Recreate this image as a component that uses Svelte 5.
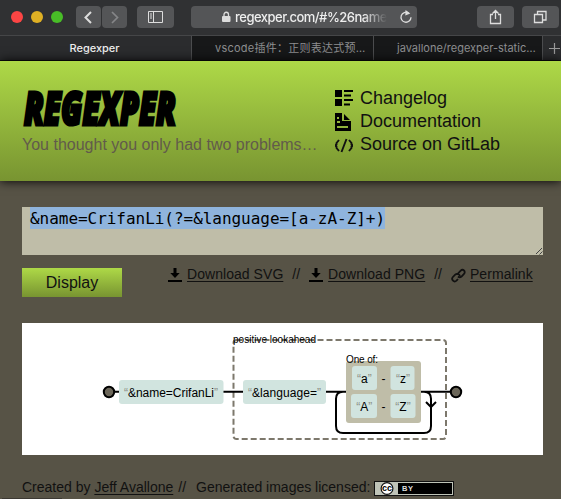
<script>
  const menu = [
    { icon: 'list', label: 'Changelog' },
    { icon: 'doc', label: 'Documentation' },
    { icon: 'code', label: 'Source on GitLab' }
  ];
  const ranges = [
    { y: 43, from: 'a', to: 'z' },
    { y: 71, from: 'A', to: 'Z' }
  ];
</script>

{#snippet download()}
  <svg class="dl" width="14" height="14" viewBox="0 0 14 14"><path d="M5.5 0h3v5h3.2L7 10 2.3 5h3.2zM0 12h14v2H0z" /></svg>
{/snippet}

<div class="page">
  <div class="toolbar">
    <i class="light red"></i><i class="light yellow"></i><i class="light green"></i>
    <div class="nav">
      <span class="tool back"><svg width="25" height="22" viewBox="0 0 25 22"><path d="M15 6l-5.5 5.5L15 17" stroke-width="2" /></svg></span>
      <span class="tool forward"><svg width="25" height="22" viewBox="0 0 25 22"><path d="M10 6l5.500 5.500L10 17" stroke-width="1.700" /></svg></span>
    </div>
    <span class="tool wide sidebar"><svg width="37" height="22" viewBox="0 0 37 22"><path d="M11.500 5.500h14v11h-14zM16.500 5.500v11M13 8h2M13 10h2M13 12h2" /></svg></span>
    <div class="address">
      <svg class="lock" width="9" height="12" viewBox="0 0 9 12"><rect y="5" width="8.500" height="6" rx="1" fill="#ddd" /><path d="M2 5V3.500a2.250 2.250 0 014.500 0V5" fill="none" stroke="#ddd" stroke-width="1.300" /></svg>
      <span class="url">regexper.com/#%26name%</span>
      <svg class="reload" width="14" height="14" viewBox="0 0 14 14"><path d="M9.500 2.900A5 5 0 1012 7.300" fill="none" stroke="#ddd" stroke-width="1.300" /><path d="M6.500 0l4.800 3.600-5 2z" fill="#ddd" /></svg>
    </div>
    <span class="tool wide share"><svg width="37" height="22" viewBox="0 0 37 22"><path d="M16 8.500h-2.500v9h10v-9H21M18.500 13V4.500M15.500 7.500l3-3 3 3" stroke-width="1.300" /></svg></span>
    <span class="tool wide"><svg width="37" height="22" viewBox="0 0 37 22"><path d="M12.500 8.500h8v8h-8zM15.500 8V5.500h8.500V14h-3" stroke-width="1.300" /></svg></span>
  </div>
  <div class="tabs">
    <span class="tab active">Regexper</span>
    <span class="tab second">vscode插件：正则表达式预…</span>
    <span class="tab third">javallone/regexper-static…</span>
    <span class="add"><svg width="13" height="24" viewBox="0 0 13 24"><path d="M1 12.500h11M6.500 7v11" stroke="#999" stroke-width="1.200" /></svg></span>
  </div>

  <header>
    <div class="brand">
      <svg class="logo" width="160" height="42" viewBox="0 0 160 42"><text x="2" y="37.500" textLength="152" lengthAdjust="spacingAndGlyphs">REGEXPER</text></svg>
      <p>You thought you only had two problems…</p>
    </div>
    <nav>
      {#each menu as item}
        <a href="#top">
          <svg width="18" height="18" viewBox="0 0 18 18">
            {#if item.icon === 'list'}
              <path d="M0 0h7v7H0zM9 0h9v2H9zM9 4.500h7v2H9zM0 9h7v7H0zM9 9h9v2H9zM9 13.500h6v2H9z" />
            {:else if item.icon === 'doc'}
              <path fill-rule="evenodd" d="M0 0h7v8h9v10H0zM2 4v2h2V4zM2 8v2h3V8zM2 13v2h11v-2zM9 1l6 6H9z" />
            {:else}
              <path d="M4 4L1.500 7v1.500L0 9.500l1.500 1V12L4 15M14 4l2.500 3v1.500l1.500 1-1.500 1V12L14 15M11.500 3l-5 13" fill="none" stroke="#111" stroke-width="1.900" />
            {/if}
          </svg><span>{item.label}</span>
        </a>
      {/each}
    </nav>
  </header>

  <main>
    <div class="input"><span class="selected">&amp;name=CrifanLi(?=&amp;language=[a-zA-Z]+)</span>
      <svg class="grip" width="8" height="8" viewBox="0 0 8 8"><path d="M1 7l6-6M4.500 7.500L7.500 4.500" stroke="#444" /></svg>
    </div>
    <div class="actions">
      <button>Display</button>
      <div class="links">
        {@render download()}<a href="#svg">Download SVG</a><i>//</i>
        {@render download()}<a href="#png">Download PNG</a><i>//</i>
        <svg class="dl chain" width="15" height="15" viewBox="0 0 15 15"><g fill="none" stroke="#111" stroke-width="1.800"><path d="M6 6.500l3.500-3.700c1-1 2.500-1.200 3.500-.3s.9 2.400 0 3.300L10.500 8.500C9.400 9.500 8 9.500 7 8.500" /><path d="M9 8.500C8.800 6 6 5 4.200 6.600L1.900 9C1 10 1 11.600 2 12.600s2.500.9 3.500 0L7 11" /></g></svg><a href="#perma">Permalink</a>
      </div>
    </div>
    <div class="result">
      <svg width="521" height="132" viewBox="0 0 521 132">
        <rect x="211.500" y="17" width="212.500" height="99" rx="3" fill="none" stroke="#7d786c" stroke-width="2" stroke-dasharray="6 3" />
        <path d="M87 68.700H434M324 68.700h-3q-7 0-7 7V103q0 7 7 7h81q7 0 7-7V75.700q0-7-7-7M404 79l5 5 5-5" fill="none" stroke="#000" stroke-width="2" />
        <circle cx="87" cy="69" r="5.200" fill="#6b6659" stroke="#000" stroke-width="2" />
        <circle cx="434" cy="69" r="5.200" fill="#6b6659" stroke="#000" stroke-width="2" />
        <rect x="97" y="57" width="104.500" height="24" rx="3" fill="#d1e4df" />
        <text x="102" y="74.200" textLength="94"><tspan class="q">“</tspan>&amp;name=CrifanLi<tspan class="q">”</tspan></text>
        <rect x="221" y="57" width="83" height="24" rx="3" fill="#d1e4df" />
        <text x="226" y="74.200" textLength="73"><tspan class="q">“</tspan>&amp;language=<tspan class="q">”</tspan></text>
        <rect x="324" y="38" width="75" height="62" rx="3" fill="#bfbda8" />
        <text class="small" x="211" y="19.500" textLength="83">positive lookahead</text>
        <text class="small" x="324" y="40" textLength="32">One of:</text>
        {#each ranges as r}
          <rect x={r.from === 'a' ? 330 : 329} y={r.y} width={r.from === 'a' ? 25 : 26} height="24" rx="3" fill="#d1e4df" />
          <rect x="368.500" y={r.y} width={r.from === 'a' ? 24 : 25} height="24" rx="3" fill="#d1e4df" />
          <text x="342.300" y={r.y + 17} text-anchor="middle"><tspan class="q">“</tspan>{r.from}<tspan class="q">”</tspan></text>
          <text x="361.500" y={r.y + 16.500} text-anchor="middle">-</text>
          <text x="381" y={r.y + 17} text-anchor="middle"><tspan class="q">“</tspan>{r.to}<tspan class="q">”</tspan></text>
        {/each}
      </svg>
    </div>
  </main>
  <footer>
    <span>Created by <a href="#author">Jeff Avallone</a></span><i>//</i><span>Generated images licensed:</span>
    <svg class="cc" width="80" height="15" viewBox="0 0 80 15">
      <rect width="80" height="15" fill="#111" /><rect x="1" y="1" width="78" height="13" fill="#bfc4b8" /><rect x="24" y="2" width="54" height="11" />
      <path d="M19 2h5v11h-5q5-5.500 0-11" fill="#bfc4b8" /><circle cx="13" cy="7.500" r="5.900" fill="#fff" stroke="#111" stroke-width="1.200" />
      <text x="8" y="10" font-size="9" font-weight="700">cc</text><text x="28" y="10.300" font-size="7.500" font-weight="700" fill="#ddd" textLength="11">BY</text>
    </svg>
  </footer>
  <div class="status"></div>
</div>

<style>
  :global(body) { margin: 0; overflow: hidden; }
  .page { width: 561px; height: 499px; overflow: hidden; position: relative; background: #575346; font-family: "Liberation Sans", Arial, sans-serif; color: #000; box-sizing: border-box; display: flex; flex-direction: column; }
  a { color: inherit; }
  svg { display: block; flex: none; }
  .toolbar { height: 36px; flex: none; background: #303133; border-bottom: 1px solid #454648; display: flex; align-items: flex-start; padding: 6px 0 0 11px; box-sizing: border-box; }
  .light { width: 12px; height: 12px; border-radius: 50%; margin: 5px 8px 0 0; flex: none; }
  .red { background: #fc4544; } .yellow { background: #dfb024; } .green { background: #48bd27; }
  .nav { display: flex; gap: 1px; margin-left: 5px; }
  .tool { background: #545557; height: 22px; width: 25px; border-radius: 4px; flex: none; }
  .tool path { fill: none; stroke: #ddd; }
  .forward path { stroke: #858688; }
  .wide { width: 37px; }
  .sidebar { margin-left: 10px; }
  .address { width: 226px; height: 22px; margin-left: 17px; background: #545557; border-radius: 4px; display: flex; align-items: center; flex: none; }
  .lock { margin-left: 31px; }
  .url { width: 152px; margin-left: 4px; font: 500 13px/22px Inter, sans-serif; letter-spacing: -.5px; color: #eee; white-space: nowrap; overflow: hidden; -webkit-mask-image: linear-gradient(90deg, #000 84%, transparent); mask-image: linear-gradient(90deg, #000 84%, transparent); }
  .reload { margin-left: 12px; }
  .share { margin: 0 8px 0 60px; }
  .tabs { height: 25px; flex: none; display: flex; background: #171819; border-bottom: 1px solid #0c0d0c; box-sizing: border-box; font: 11px/24px Inter, "Noto Sans CJK SC", sans-serif; color: #8d8e90; white-space: nowrap; }
  .tab { box-sizing: border-box; overflow: hidden; border-right: 1px solid #4b4c4e; flex: none; }
  .active { width: 192px; padding-right: 2px; text-align: center; background: #2b2c2e; color: #eee; font-weight: 500; }
  .second { width: 182px; padding-left: 23px; letter-spacing: .25px; }
  .third { width: 169px; padding-left: 23px; }
  .add { margin-left: 5px; width: 13px; flex: none; background: #2b2c2e; box-shadow: -5px 0 #2b2c2e; }
  header { height: 120px; flex: none; background: linear-gradient(#aed947, #789431); box-shadow: 0 0 10px #000; display: flex; position: relative; }
  .brand { width: 335px; padding: 26px 0 0 22px; box-sizing: border-box; flex: none; }
  .logo { overflow: visible; }
  .logo text { font: italic 800 46px "Open Sans", sans-serif; stroke: #000; stroke-width: 3.200px; }
  .brand p { margin: 6px 0 0; font-size: 16px; line-height: 20px; color: #625b4b; white-space: nowrap; }
  nav { padding-top: 26px; display: flex; flex-direction: column; }
  nav a { display: flex; align-items: center; height: 23px; font-size: 18px; text-decoration: none; color: #111; white-space: nowrap; }
  nav svg { margin-right: 7px; }
  main { padding: 26px 18px 0 22px; }
  .input { position: relative; height: 48px; background: #bfbda8; padding-left: 8px; }
  .selected { display: inline-block; font: 16px/24px "DejaVu Sans Mono", monospace; height: 22px; letter-spacing: -.037px; background: #8fb4dd; white-space: nowrap; vertical-align: top; }
  .grip { position: absolute; right: 0; bottom: 0; }
  .actions { display: flex; margin-top: 13px; height: 29px; }
  button { width: 100px; height: 29px; padding: 0; border: 0; background: linear-gradient(#aed947, #789431); font: 16px/29px "Liberation Sans", sans-serif; color: #111; flex: none; }
  .links { margin-left: 46px; display: flex; height: 14px; line-height: 13px; font-size: 14px; white-space: nowrap; color: #111; }
  .links a, footer a { text-decoration-thickness: 1px; text-underline-offset: 2px; }
  .links a { letter-spacing: .05px; }
  i { font-style: normal; }
  .links i { margin: 0 9px; }
  .dl { margin-right: 5px; }
  .chain { margin-right: 4px; }
  .result { margin-top: 26px; height: 132px; background: #fff; }
  .result text { font: 12px "Liberation Sans", sans-serif; }
  .result .small { font-size: 10px; }
  .result .q { fill: #8c8e86; }
  footer { display: flex; margin: 22px 0 0 22px; height: 20px; line-height: 20px; font-size: 14px; color: #111; white-space: nowrap; }
  footer i { margin: 0 10px 0 5px; }
  .cc { margin: 4px 0 0 4px; }
  .status { position: absolute; left: 2px; bottom: 0; width: 60px; height: 1px; background: #3c3933; }
</style>
